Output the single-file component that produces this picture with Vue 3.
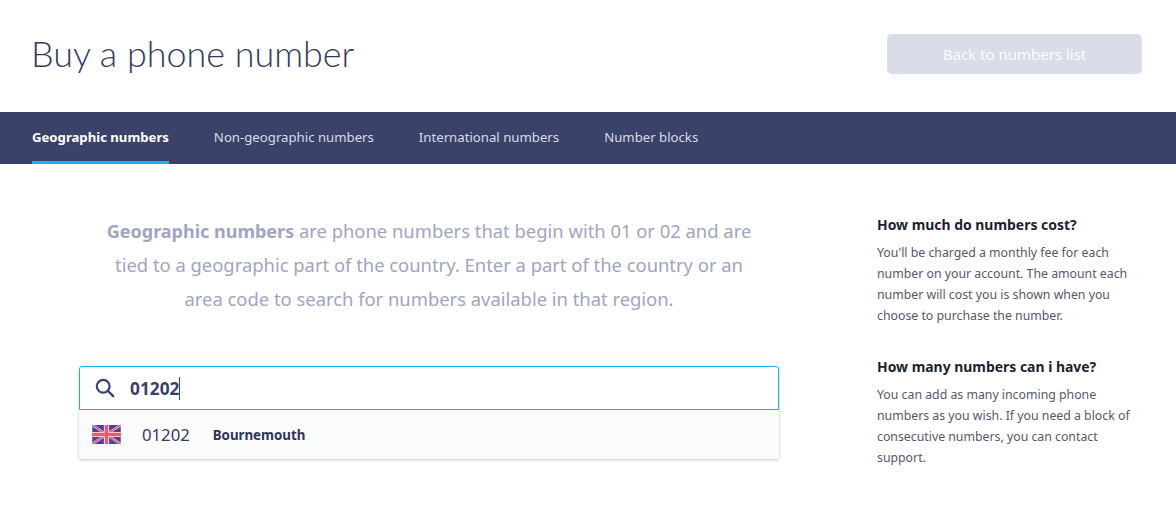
<template>
  <div class="page">
    <header class="top">
      <h1>Buy a phone number</h1>
      <button class="back" type="button">Back to numbers list</button>
    </header>
    <nav class="tabs">
      <a v-for="(tab, i) in tabs" :key="tab" class="tab" :class="{ active: i === 0 }">{{ tab }}</a>
    </nav>
    <div class="content">
      <main class="main">
        <p class="intro">
          <strong>Geographic numbers</strong> are phone numbers that begin with 01 or 02 and are<br>
          tied to a geographic part of the country. Enter a part of the country or an<br>
          area code to search for numbers available in that region.
        </p>
        <div class="search">
          <div class="field">
            <svg class="lens" width="20" height="20" viewBox="0 0 20 20" fill="none">
              <circle cx="8.2" cy="8.2" r="6.4" stroke="#3b4269" stroke-width="2.2" />
              <path d="M12.9 12.9 18.2 18.2" stroke="#3b4269" stroke-width="2.4" stroke-linecap="round" />
            </svg>
            <span class="typed">01202</span><span class="caret"></span>
          </div>
          <div class="result">
            <svg class="flag" width="29" height="19" viewBox="0 0 60 40">
              <rect width="60" height="40" rx="2" fill="#41479b" />
              <path d="M0 0 60 40M60 0 0 40" stroke="#f5f5f5" stroke-width="5" />
              <path d="M0 0 60 40M60 0 0 40" stroke="#f0566d" stroke-width="3.5" />
              <path d="M30 0V40M0 20H60" stroke="#f5f5f5" stroke-width="11" />
              <path d="M30 0V40M0 20H60" stroke="#f0566d" stroke-width="7.5" />
            </svg>
            <span class="code">01202</span>
            <span class="place">Bournemouth</span>
          </div>
        </div>
      </main>
      <aside class="side">
        <section v-for="item in help" :key="item.title" class="help">
          <h3>{{ item.title }}</h3>
          <p v-html="item.text"></p>
        </section>
      </aside>
    </div>
  </div>
</template>

<script setup>
const tabs = ['Geographic numbers', 'Non-geographic numbers', 'International numbers', 'Number blocks']

const help = [
  {
    title: 'How much do numbers cost?',
    text: "You'll be charged a monthly fee for each<br>number on your account. The amount each<br>number will cost you is shown when you<br>choose to purchase the number."
  },
  {
    title: 'How many numbers can i have?',
    text: 'You can add as many incoming phone<br>numbers as you wish. If you need a block of<br>consecutive numbers, you can contact<br>support.'
  }
]
</script>

<style>
html, body { background: #fff; }
</style>

<style scoped>
.page {
  width: 1176px;
  height: 511px;
  overflow: hidden;
  font-family: "Noto Sans", "Liberation Sans", sans-serif;
  color: #2f3459;
}

.top {
  height: 112px;
  display: flex;
  align-items: center;
  justify-content: space-between;
  padding: 0 34px 4px 31px;
  box-sizing: border-box;
}

h1 {
  margin: 0 0 2px;
  font-size: 35.9px;
  font-weight: 300;
  color: #343a63;
  font-family: Lato, sans-serif;
}

.back {
  width: 255px;
  height: 40px;
  border: 0;
  border-radius: 5px;
  background: #dadce8;
  color: #fbfbfd;
  font: 15px "Noto Sans", sans-serif;
}

.tabs {
  height: 52px;
  background: #3b4269;
  display: flex;
  gap: 45px;
  padding-left: 32px;
}

.tab {
  line-height: 50px;
  font-size: 13.2px;
  color: #d9dbe7;
}

.tab.active {
  color: #fff;
  font-size: 13.15px;
  font-weight: 700;
  border-bottom: 3px solid #17b5ee;
  height: 49px;
}

.content {
  display: flex;
}

.main {
  width: 700px;
  margin-left: 79px;
  padding-top: 50px;
}

.intro {
  margin: 0 auto;
  width: 680px;
  text-align: center;
  font-size: 18.4px;
  line-height: 34px;
  color: #a0a5c0;
}

.intro strong {
  font-size: 18px;
  font-weight: 700;
}

.search {
  margin-top: 50px;
  border-radius: 3px;
  box-shadow: 0 1px 3px rgba(40, 45, 80, 0.3);
}

.field {
  height: 44px;
  box-sizing: border-box;
  border: 1px solid #17b5ee;
  border-radius: 3px 3px 0 0;
  background: #fff;
  display: flex;
  align-items: center;
  padding-left: 15px;
}

.lens {
  margin-right: 15px;
}

.typed {
  font-size: 17.3px;
  font-weight: 700;
  color: #3b4269;
}

.caret {
  width: 1px;
  height: 23px;
  background: #3b4269;
}

.result {
  height: 49px;
  background: #fbfbfb;
  border-radius: 0 0 3px 3px;
  display: flex;
  align-items: center;
  padding-left: 13px;
}

.code {
  margin-left: 21px;
  font-size: 16.7px;
  color: #343a63;
}

.place {
  margin-left: 23px;
  font-size: 13.3px;
  font-weight: 700;
  color: #2f3459;
}

.side {
  margin-left: 98px;
  padding-top: 50px;
  width: 270px;
}

.help {
  margin-bottom: 30px;
}

.help h3 {
  margin: 0 0 6px;
  font-size: 13.95px;
  line-height: 22px;
  font-weight: 700;
  color: #1c1f33;
}

.help p {
  margin: 0;
  font-size: 12.3px;
  line-height: 21px;
  color: #55586a;
}
</style>
